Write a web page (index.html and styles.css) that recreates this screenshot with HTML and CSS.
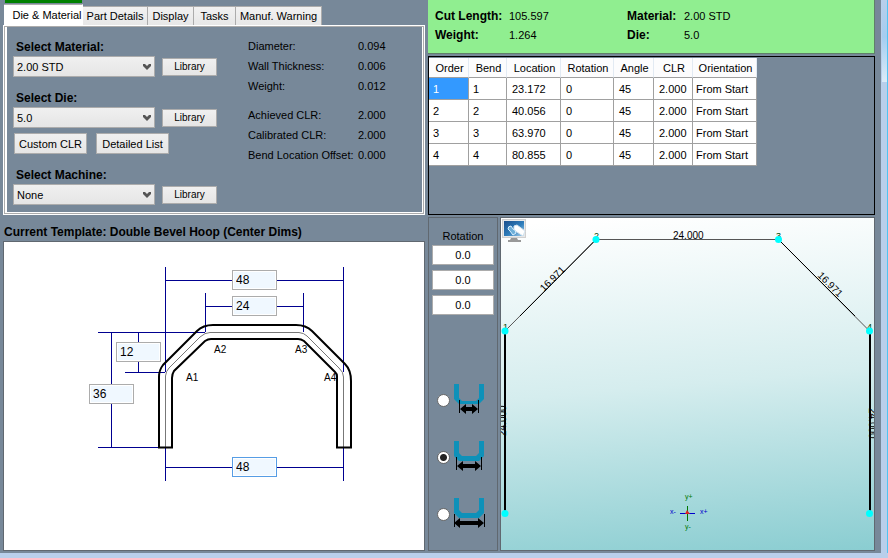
FILE: index.html
```html
<!DOCTYPE html>
<html lang="en">
<head>
<meta charset="utf-8">
<title>Bend Designer</title>
<link rel="stylesheet" href="styles.css">
</head>
<body>
<svg class="defs" aria-hidden="true">
  <defs>
    <symbol id="chevron" viewBox="0 0 8 6"><path d="M0 0h2l2 2 2-2h2v2L4 6 0 2z" fill="#555"/></symbol>
  </defs>
</svg>
<div class="app">
  <main class="workspace">
    <section class="left">
      <div class="progress"></div>
      <nav class="tabs">
        <button class="tab active">Die &amp; Material</button>
        <button class="tab part">Part Details</button>
        <button class="tab display">Display</button>
        <button class="tab tasks">Tasks</button>
        <button class="tab warning">Manuf. Warning</button>
      </nav>
      <div class="tab-page">
        <form class="choices">
          <label for="material">Select Material:</label>
          <div class="choice">
            <div class="select"><select id="material"><option>2.00 STD</option></select><svg><use href="#chevron"/></svg></div>
            <button type="button" class="btn library">Library</button>
          </div>
          <label for="die">Select Die:</label>
          <div class="choice">
            <div class="select"><select id="die"><option>5.0</option></select><svg><use href="#chevron"/></svg></div>
            <button type="button" class="btn library">Library</button>
          </div>
          <div class="die-actions">
            <button type="button" class="btn">Custom CLR</button>
            <button type="button" class="btn">Detailed List</button>
          </div>
          <label for="machine">Select Machine:</label>
          <div class="choice">
            <div class="select"><select id="machine"><option>None</option></select><svg><use href="#chevron"/></svg></div>
            <button type="button" class="btn library">Library</button>
          </div>
        </form>
        <div class="facts">
          <dl>
            <dt>Diameter:</dt><dd>0.094</dd>
            <dt>Wall Thickness:</dt><dd>0.006</dd>
            <dt>Weight:</dt><dd>0.012</dd>
          </dl>
          <dl>
            <dt>Achieved CLR:</dt><dd>2.000</dd>
            <dt>Calibrated CLR:</dt><dd>2.000</dd>
            <dt>Bend Location Offset:</dt><dd>0.000</dd>
          </dl>
        </div>
      </div>
      <h2>Current Template: Double Bevel Hoop (Center Dims)</h2>
      <div class="template">
        <div class="drawing">
          <svg viewBox="4 242 420 308">
            <g class="dim">
              <path d="M165.500 280.500H343.500M165.500 267V372M343.500 267V372M205.500 306.500H303.500M205.500 293V332M303.500 293V332M98 332.500H205M111.500 332V447M138.500 332V372M125 372.500H165M98 447.500H159M165.500 448V481M343.500 448V481M165.500 467.500H343.500"/>
            </g>
            <path class="center" d="M165.500 447V376Q166 371 169 368L200 337Q205 332.500 210 332.500H299Q304 333 307 336L339 368Q343.500 372 343.500 377V447"/>
            <path class="tube" d="M159 447.500V377Q159 370 163 365L197 331Q203 325 213 325H296Q306 325 312 331L345 364Q351 370 351 381V447.500H337V376Q337 374 335 372L304 341Q301 339 298 339H211Q208 339 205 341L174 371Q172 374 172 378V447.500Z"/>
            <g class="mark"><text x="186" y="381">A1</text><text x="214" y="353">A2</text><text x="295" y="353">A3</text><text x="324" y="381">A4</text></g>
          </svg>
          <input class="size outer-top" aria-label="Outer width" value="48">
          <input class="size inner-top" aria-label="Top width" value="24">
          <input class="size bevel" aria-label="Bevel height" value="12">
          <input class="size height" aria-label="Height" value="36">
          <input class="size base" aria-label="Base width" value="48">
        </div>
      </div>
    </section>
    <section class="right">
      <dl class="summary">
        <dt>Cut Length:</dt><dd>105.597</dd><dt>Material:</dt><dd>2.00 STD</dd>
        <dt>Weight:</dt><dd>1.264</dd><dt>Die:</dt><dd>5.0</dd>
      </dl>
      <div class="bends">
        <table>
          <colgroup><col class="c-order"><col class="c-bend"><col class="c-loc"><col class="c-rot"><col class="c-angle"><col class="c-clr"><col class="c-orient"></colgroup>
          <thead><tr><th>Order</th><th>Bend</th><th>Location</th><th>Rotation</th><th>Angle</th><th>CLR</th><th>Orientation</th></tr></thead>
          <tbody>
            <tr><td class="selected">1</td><td>1</td><td>23.172</td><td>0</td><td>45</td><td>2.000</td><td>From Start</td></tr>
            <tr><td>2</td><td>2</td><td>40.056</td><td>0</td><td>45</td><td>2.000</td><td>From Start</td></tr>
            <tr><td>3</td><td>3</td><td>63.970</td><td>0</td><td>45</td><td>2.000</td><td>From Start</td></tr>
            <tr><td>4</td><td>4</td><td>80.855</td><td>0</td><td>45</td><td>2.000</td><td>From Start</td></tr>
          </tbody>
        </table>
      </div>
      <div class="viewer">
        <aside class="controls">
          <h3>Rotation</h3>
          <input class="angle" aria-label="Rotation X" value="0.0">
          <input class="angle" aria-label="Rotation Y" value="0.0">
          <input class="angle" aria-label="Rotation Z" value="0.0">
          <div class="modes">
            <label><input type="radio" name="mode" aria-label="Inside dimensions"><svg viewBox="0 0 32 32"><path class="cup" d="M0 0h5v14l3 3h14l3-3V0h5v15l-5 5H5l-5-5z"/><path class="arrow-ends" d="M5.500 16v13M24.500 16v13"/><path class="arrow" d="M6 25l6-5v3h6v-3l6 5-6 5v-3h-6v3z"/></svg></label>
            <label><input type="radio" name="mode" aria-label="Center dimensions" checked><svg viewBox="0 0 32 32"><path class="cup" d="M0 0h5v12l3 3h14l3-3V0h5v15l-5 5H5l-5-5z"/><path class="arrow-ends" d="M2.500 16v13M27.500 16v13"/><path class="arrow" d="M3 25l6-5v3h12v-3l6 5-6 5v-3H9v3z"/></svg></label>
            <label><input type="radio" name="mode" aria-label="Outside dimensions"><svg viewBox="0 0 32 32"><path class="cup" d="M0 0h5v12l3 3h14l3-3V0h5v15l-5 5H5l-5-5z"/><path class="arrow-ends" d="M.500 16v13M30.500 16v13"/><path class="arrow" d="M0 25l6-5v3h18v-3l6 5-6 5v-3H6v3z"/></svg></label>
          </div>
        </aside>
        <div class="view">
          <svg viewBox="501 218 373 332">
            <defs>
              <linearGradient id="screen" x1="0" y1="0" x2="1" y2="1"><stop offset="0" stop-color="#1c4f8c"/><stop offset=".55" stop-color="#2e7dbb"/><stop offset="1" stop-color="#a8d0ea"/></linearGradient>
            </defs>
            <g>
              <rect x="502.500" y="219.500" width="23" height="18" fill="#e8e8e8" stroke="#d0d0d0"/>
              <rect x="504" y="221" width="20" height="15" fill="url(#screen)"/>
              <path d="M514 226l3-1 8 6-2 5-9-6z" fill="#fff" stroke="#d5e4ef"/>
              <path d="M508 229q0-3 3-3l2 3q3 1 3 4l-3 2-3-4z" fill="#6eafd8" stroke="#d9efff"/>
              <path d="M511 238h6l1 2h3v2h-13v-2h2z" fill="#999"/>
            </g>
            <g class="label">
              <text x="503" y="330">1</text><text x="594" y="239">2</text><text x="776" y="239">3</text><text x="867" y="330">4</text>
            </g>
            <path class="thin" d="M505 331L596 239.500H778.500L869.500 331"/>
            <path class="edge" d="M520 316L596 239.500M778.500 239.500L855 316"/>
            <path class="leg" d="M505 331V513M870 331V513"/>
            <g class="length">
              <text x="673" y="239">24.000</text>
              <text transform="translate(544 292) rotate(-45)">16.971</text>
              <text transform="translate(817 276) rotate(45)">16.971</text>
              <text transform="translate(506 436) rotate(-90)">24.000</text>
              <text transform="translate(869 408) rotate(90)">24.000</text>
            </g>
            <g fill="#0ff"><circle cx="505" cy="331" r="3.500"/><circle cx="596" cy="239.500" r="3.500"/><circle cx="778.500" cy="239.500" r="3.500"/><circle cx="869.500" cy="331" r="3.500"/><circle cx="505" cy="513.500" r="3.500"/><circle cx="869.500" cy="513.500" r="3.500"/></g>
            <path d="M680 513.500h15" stroke="#00c"/><path d="M687.500 506v15" stroke="#070"/><path d="M685 514l2-4 3 4z" fill="#d22"/>
            <g class="axis"><text class="x" x="670" y="514">x-</text><text class="x" x="700" y="514">x+</text><text class="y" x="685" y="499">y+</text><text class="y" x="685" y="529">y-</text></g>
          </svg>
        </div>
      </div>
    </section>
  </main>
  <div class="frame"><div class="frame-glow"></div></div>
</div>
</body>
</html>
```
FILE: styles.css
```css
* { box-sizing: border-box; }
body {
  margin: 0;
  color: #000;
  background: #778899;
  font: 11px/20px "Liberation Sans", Arial, sans-serif;
}
h2, h3, dl, dd { margin: 0; }
button, input, select { font: inherit; color: inherit; margin: 0; border-radius: 0; }
.defs { position: absolute; width: 0; height: 0; }

.app { display: flex; min-height: 100vh; border-bottom: 5px solid #b9cfeb; }
.workspace {
  flex: 1;
  display: grid;
  grid-template-columns: minmax(425px, 425fr) minmax(447px, 447fr);
  gap: 3px;
  padding-right: 6px;
}
.frame { width: 7px; background: #b9cfeb; border-right: 1px solid #4fc4f2; }
.frame-glow { height: 82px; background: linear-gradient(#b9cfeb, #a4cdf0 45%, #dcecf9); border-left: 1px solid #b9cfeb; }

.left { display: flex; flex-direction: column; padding: 0 0 2px 3px; }
.progress { width: 77px; height: 3px; margin: 0 0 1px 2px; background: #008000; }
.tabs { display: flex; align-items: flex-end; height: 21px; padding-left: 1px; }
.tab {
  height: 19px;
  padding: 0;
  line-height: 18px;
  border: 1px solid #acacac;
  border-bottom: 0;
  border-left-width: 0;
  background: linear-gradient(#f2f2f2, #e7e7e7);
  white-space: nowrap;
}
.tab.active { width: 79px; height: 21px; background: #fff; padding-left: 8px; border-right-color: #fff; }
.part { width: 65px; }
.display { width: 46px; }
.tasks { width: 42px; }
.warning { width: 86px; }

.tab-page {
  display: flex;
  gap: 31px;
  padding: 11px 6px 7px;
  border: 3px solid #fff;
  border-top-width: 2px;
  border-left-width: 4px;
  outline: 1px solid #acacac;
  outline-offset: -2px;
}
.choices { display: flex; flex-direction: column; width: 204px; }
.choices > label { padding-left: 3px; font-size: 12px; line-height: 18px; font-weight: bold; }
.choice { display: flex; align-items: center; gap: 7px; }
.choice + label, .die-actions + label { margin-top: 12px; }
.select { position: relative; width: 142px; height: 21px; }
.select select {
  appearance: none;
  width: 100%;
  height: 21px;
  padding: 0 3px;
  border: 1px solid #acacac;
  background: linear-gradient(#f0f0f0, #e5e5e5);
}
.select svg { position: absolute; right: 4px; top: 8px; width: 8px; height: 6px; pointer-events: none; }
.btn { width: 73px; height: 21px; padding: 0; border: 1px solid #acacac; background: linear-gradient(#f0f0f0, #e5e5e5); line-height: 18px; white-space: nowrap; }
.library { width: 55px; height: 18px; line-height: 16px; font-size: 10px; }
.die-actions { display: flex; gap: 9px; margin: 5px 0 0 1px; }
.facts { display: flex; flex-direction: column; gap: 9px; margin-top: -2px; }
.facts dl { display: grid; grid-template-columns: 110px auto; white-space: nowrap; }

h2 { padding: 8px 0 0 1px; font-size: 12px; line-height: 18px; white-space: nowrap; }
.template { flex: 1; border: 1px solid #606870; background: #fff; }
.drawing { position: relative; width: 420px; }
.drawing svg { display: block; width: 100%; }
.dim path { fill: none; stroke: #000090; }
.center { fill: none; stroke: #777; }
.tube { fill: none; stroke: #000; stroke-width: 2; }
.mark { font: 10px "Liberation Sans", sans-serif; }
.size { position: absolute; width: 45px; height: 20px; padding: 0 3px; border: 1px solid #acacac; background: #f0f8ff; box-shadow: inset 0 0 0 1px #fff; font-size: 12px; }
.outer-top { left: 228px; top: 28px; }
.inner-top { left: 228px; top: 54px; }
.bevel { left: 112px; top: 100px; }
.height { left: 85px; top: 142px; }
.base { left: 228px; top: 215px; border-color: #569de5; }

.right { display: flex; flex-direction: column; gap: 2px; padding-bottom: 2px; }
.summary {
  display: grid;
  grid-template-columns: 74px 118px 57px auto;
  grid-auto-rows: 19px;
  align-content: start;
  padding: 7px 0 8px 7px;
  line-height: 19px;
  background: #90ee90;
  border: 1px solid #60806a;
  border-width: 0 1px 1px 0;
}
.summary dt { font-size: 12px; font-weight: bold; }
.bends { height: 159px; border: 1px solid #000; padding-top: 1px; }
table { width: 328px; table-layout: fixed; border-collapse: separate; border-spacing: 0; background: #fff; }
th { height: 20px; padding: 0 0 0 2px; font-weight: normal; line-height: 18px; background: #fcfcfd; border-right: 1px solid #e2eaf3; border-bottom: 1px solid #a0a0a0; }
td { height: 22px; padding: 0 4px; line-height: 20px; border-right: 1px solid #a0a0a0; border-bottom: 1px solid #a0a0a0; white-space: nowrap; }
td:nth-child(n+3) { padding-left: 5px; }
td:last-child { padding-left: 3px; }
.selected { color: #fff; background: #3399ff; }
.c-order { width: 40px; }
.c-bend { width: 38px; }
.c-loc { width: 54px; }
.c-rot { width: 53px; }
.c-angle { width: 40px; }
.c-clr { width: 39px; }
.c-orient { width: 64px; }

.viewer { flex: 1; display: flex; gap: 2px; }
.controls { width: 70px; padding: 9px 3px; border: 1px solid #606870; }
h3 { font-size: 11px; font-weight: normal; text-align: center; line-height: 18px; }
.angle { display: block; width: 62px; height: 20px; margin-bottom: 5px; padding: 0; text-align: center; border: 1px solid #acacac; background: #fff; }
.modes { display: flex; flex-direction: column; gap: 25px; padding: 64px 0 0 5px; }
.modes label { display: flex; align-items: center; gap: 4px; height: 32px; }
.modes input { appearance: none; width: 13px; height: 13px; border: 1px solid #666; border-radius: 50%; background: #fff; }
.modes input:checked { background: radial-gradient(circle, #222 0 3px, #fff 4px); }
.modes svg { width: 32px; height: 32px; }
.cup { fill: #0e91b9; }
.arrow { fill: #000; }
.arrow-ends { stroke: #000; }
.view { flex: 1; border: 1px solid #606870; background: linear-gradient(175deg, #fff 2%, #d5edee 50%, #8acdd1); }
.view svg { display: block; width: 100%; }
.thin { fill: none; stroke: #555; }
.edge { fill: none; stroke: #000; }
.leg { stroke: #000; stroke-width: 2; }
.label { fill: #004400; font: 9px "Liberation Sans", sans-serif; }
.length { font: 10px "Liberation Sans", sans-serif; }
.axis { font: 7px "Liberation Sans", sans-serif; }
.x { fill: #00c; }
.y { fill: #070; }
```
